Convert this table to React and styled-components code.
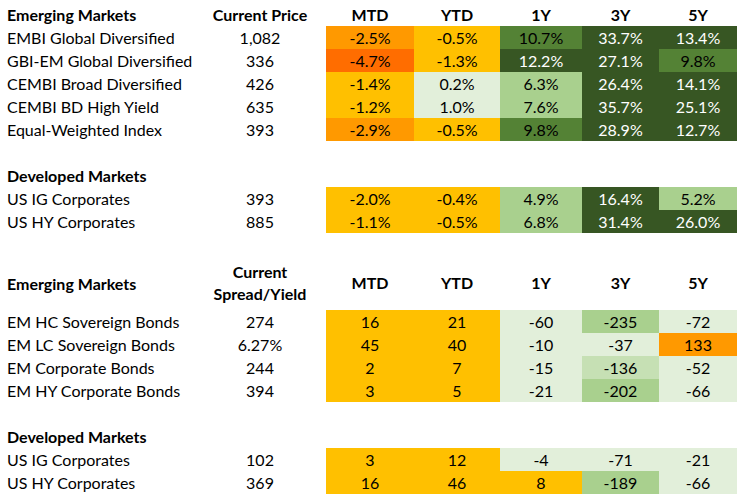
import React from "react";
import styled, { createGlobalStyle } from "styled-components";

const GlobalStyle = createGlobalStyle`
  body {
    margin: 0;
    background: #fff;
    font-family: Lato, "Liberation Sans", sans-serif;
    color: #000;
  }
`;

const C = {
  gold: "#FFC000",
  orange: "#FF9900",
  deep: "#FF6D00",
  dark: "#375623",
  mid: "#548235",
  light: "#A9D08E",
  pale: "#C6E0B4",
  faint: "#E2EFDA",
};

const Sheet = styled.div`
  padding-top: 3px;
  width: 737px;
`;

const Row = styled.div`
  display: grid;
  grid-template-columns: 194px 132px 88px 86px 82px 77px 78px;
  height: ${(p) => p.h || 23}px;
  font-size: 16px;
`;

const Label = styled.div`
  display: flex;
  align-items: center;
  padding-left: 7px;
  font-weight: ${(p) => (p.bold ? 700 : 400)};
  white-space: nowrap;
`;

const Cell = styled.div`
  display: flex;
  align-items: center;
  justify-content: center;
  text-align: center;
  background: ${(p) => p.bg || "transparent"};
  color: ${(p) => (p.bg === C.dark ? "#fff" : "#000")};
  font-weight: ${(p) => (p.bold ? 700 : 400)};
  line-height: 22px;
  white-space: nowrap;
`;

const Gap = styled.div`
  height: 23px;
`;

const heads = ["MTD", "YTD", "1Y", "3Y", "5Y"];

const priceEm = [
  ["EMBI Global Diversified", "1,082", [["-2.5%", C.orange], ["-0.5%", C.gold], ["10.7%", C.mid], ["33.7%", C.dark], ["13.4%", C.dark]]],
  ["GBI-EM Global Diversified", "336", [["-4.7%", C.deep], ["-1.3%", C.gold], ["12.2%", C.dark], ["27.1%", C.dark], ["9.8%", C.mid]]],
  ["CEMBI Broad Diversified", "426", [["-1.4%", C.gold], ["0.2%", C.faint], ["6.3%", C.light], ["26.4%", C.dark], ["14.1%", C.dark]]],
  ["CEMBI BD High Yield", "635", [["-1.2%", C.gold], ["1.0%", C.faint], ["7.6%", C.light], ["35.7%", C.dark], ["25.1%", C.dark]]],
  ["Equal-Weighted Index", "393", [["-2.9%", C.orange], ["-0.5%", C.gold], ["9.8%", C.mid], ["28.9%", C.dark], ["12.7%", C.dark]]],
];

const priceDm = [
  ["US IG Corporates", "393", [["-2.0%", C.gold], ["-0.4%", C.gold], ["4.9%", C.light], ["16.4%", C.dark], ["5.2%", C.light]]],
  ["US HY Corporates", "885", [["-1.1%", C.gold], ["-0.5%", C.gold], ["6.8%", C.light], ["31.4%", C.dark], ["26.0%", C.dark]]],
];

const spreadEm = [
  ["EM HC Sovereign Bonds", "274", [["16", C.gold], ["21", C.gold], ["-60", C.faint], ["-235", C.light], ["-72", C.faint]]],
  ["EM LC Sovereign Bonds", "6.27%", [["45", C.gold], ["40", C.gold], ["-10", C.faint], ["-37", C.faint], ["133", C.orange]]],
  ["EM Corporate Bonds", "244", [["2", C.gold], ["7", C.gold], ["-15", C.faint], ["-136", C.pale], ["-52", C.faint]]],
  ["EM HY Corporate Bonds", "394", [["3", C.gold], ["5", C.gold], ["-21", C.faint], ["-202", C.light], ["-66", C.faint]]],
];

const spreadDm = [
  ["US IG Corporates", "102", [["3", C.gold], ["12", C.gold], ["-4", C.faint], ["-71", C.faint], ["-21", C.faint]]],
  ["US HY Corporates", "369", [["16", C.gold], ["46", C.gold], ["8", C.gold], ["-189", C.light], ["-66", C.faint]]],
];

function DataRows({ rows }) {
  return rows.map(([name, value, cells]) => (
    <Row key={name + value}>
      <Label>{name}</Label>
      <Cell>{value}</Cell>
      {cells.map(([v, bg], i) => (
        <Cell key={i} bg={bg}>{v}</Cell>
      ))}
    </Row>
  ));
}

function Header({ title, current, h }) {
  return (
    <Row h={h}>
      <Label bold>{title}</Label>
      <Cell bold>{current}</Cell>
      {heads.map((t) => (
        <Cell key={t} bold>{t}</Cell>
      ))}
    </Row>
  );
}

function SubHeader({ title }) {
  return (
    <Row>
      <Label bold>{title}</Label>
    </Row>
  );
}

export default function App() {
  return (
    <>
      <GlobalStyle />
      <Sheet>
        <Header title="Emerging Markets" current="Current Price" />
        <DataRows rows={priceEm} />
        <Gap />
        <SubHeader title="Developed Markets" />
        <DataRows rows={priceDm} />
        <Gap />
        <Header
          title="Emerging Markets"
          h={54}
          current={
            <span>
              Current
              <br />
              Spread/Yield
            </span>
          }
        />
        <DataRows rows={spreadEm} />
        <Gap />
        <SubHeader title="Developed Markets" />
        <DataRows rows={spreadDm} />
      </Sheet>
    </>
  );
}
